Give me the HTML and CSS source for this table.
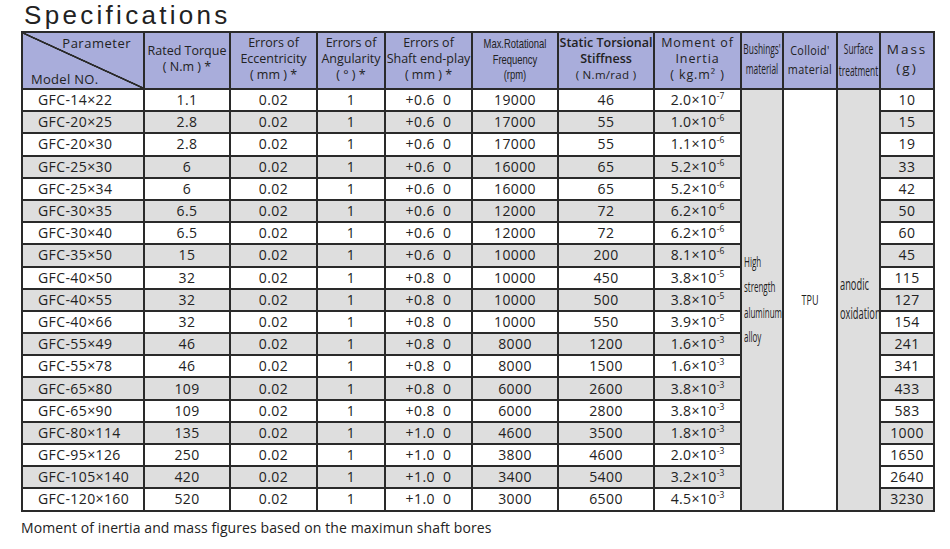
FILE: index.html
```html
<!DOCTYPE html>
<html>
<head>
<meta charset="utf-8">
<link rel="stylesheet" href="styles.css">
</head>
<body>
<h1 class="title">Specifications</h1>
<table class="spec">
<colgroup>
<col class="c-model"><col class="c-torque"><col class="c-ecc"><col class="c-ang"><col class="c-shaft"><col class="c-rpm"><col class="c-stiff"><col class="c-inertia"><col class="c-bush"><col class="c-colloid"><col class="c-surface"><col class="c-mass">
</colgroup>
<thead>
<tr>
<th class="diag"><span class="param">Parameter</span><span class="model">Model NO.</span></th>
<th class="h-torque">Rated Torque<br>( N.m ) *</th>
<th>Errors of<br>Eccentricity<br>( mm ) *</th>
<th>Errors of<br>Angularity<br>( ° ) *</th>
<th>Errors of<br>Shaft end-play<br>( mm ) *</th>
<th><div class="fx"><span class="cond c-rpmtxt">Max.Rotational<br>Frequency<br>(rpm)</span></div></th>
<th class="h-stiff">Static Torsional<br>Stiffness<br><span class="small">( N.m/rad )</span></th>
<th class="h-inertia">Moment of<br>Inertia<br>( kg.m² )</th>
<th><div class="fx"><span class="cond cond-tight">Bushings'<br>material</span></div></th>
<th><div class="fx"><span class="cond cond-mid">Colloid'<br>material</span></div></th>
<th><div class="fx"><span class="cond cond-surf">Surface<br>treatment</span></div></th>
<th class="h-mass">Mass<br>(g)</th>
</tr>
</thead>
<tbody>
<tr class="w"><td class="m">GFC-14×22</td><td>1.1</td><td>0.02</td><td>1</td><td>+0.6&nbsp;&nbsp;0</td><td>19000</td><td>46</td><td>2.0×10<sup>-7</sup></td>
<td rowspan="19" class="merged g"><span class="mtxt vlist">High<br>strength<br>aluminum<br>alloy</span></td>
<td rowspan="19" class="merged w"><div class="fx"><span class="cond tpu">TPU</span></div></td>
<td rowspan="19" class="merged g"><span class="mtxt vlist2">anodic<br>oxidation</span></td>
<td class="w">10</td></tr>
<tr class="g"><td class="m">GFC-20×25</td><td>2.8</td><td>0.02</td><td>1</td><td>+0.6&nbsp;&nbsp;0</td><td>17000</td><td>55</td><td>1.0×10<sup>-6</sup></td><td class="g">15</td></tr>
<tr class="w"><td class="m">GFC-20×30</td><td>2.8</td><td>0.02</td><td>1</td><td>+0.6&nbsp;&nbsp;0</td><td>17000</td><td>55</td><td>1.1×10<sup>-6</sup></td><td class="w">19</td></tr>
<tr class="g"><td class="m">GFC-25×30</td><td>6</td><td>0.02</td><td>1</td><td>+0.6&nbsp;&nbsp;0</td><td>16000</td><td>65</td><td>5.2×10<sup>-6</sup></td><td class="g">33</td></tr>
<tr class="w"><td class="m">GFC-25×34</td><td>6</td><td>0.02</td><td>1</td><td>+0.6&nbsp;&nbsp;0</td><td>16000</td><td>65</td><td>5.2×10<sup>-6</sup></td><td class="w">42</td></tr>
<tr class="g"><td class="m">GFC-30×35</td><td>6.5</td><td>0.02</td><td>1</td><td>+0.6&nbsp;&nbsp;0</td><td>12000</td><td>72</td><td>6.2×10<sup>-6</sup></td><td class="g">50</td></tr>
<tr class="w"><td class="m">GFC-30×40</td><td>6.5</td><td>0.02</td><td>1</td><td>+0.6&nbsp;&nbsp;0</td><td>12000</td><td>72</td><td>6.2×10<sup>-6</sup></td><td class="w">60</td></tr>
<tr class="g"><td class="m">GFC-35×50</td><td>15</td><td>0.02</td><td>1</td><td>+0.6&nbsp;&nbsp;0</td><td>10000</td><td>200</td><td>8.1×10<sup>-6</sup></td><td class="g">45</td></tr>
<tr class="w"><td class="m">GFC-40×50</td><td>32</td><td>0.02</td><td>1</td><td>+0.8&nbsp;&nbsp;0</td><td>10000</td><td>450</td><td>3.8×10<sup>-5</sup></td><td class="w">115</td></tr>
<tr class="g"><td class="m">GFC-40×55</td><td>32</td><td>0.02</td><td>1</td><td>+0.8&nbsp;&nbsp;0</td><td>10000</td><td>500</td><td>3.8×10<sup>-5</sup></td><td class="g">127</td></tr>
<tr class="w"><td class="m">GFC-40×66</td><td>32</td><td>0.02</td><td>1</td><td>+0.8&nbsp;&nbsp;0</td><td>10000</td><td>550</td><td>3.9×10<sup>-5</sup></td><td class="w">154</td></tr>
<tr class="g"><td class="m">GFC-55×49</td><td>46</td><td>0.02</td><td>1</td><td>+0.8&nbsp;&nbsp;0</td><td>8000</td><td>1200</td><td>1.6×10<sup>-3</sup></td><td class="g">241</td></tr>
<tr class="w"><td class="m">GFC-55×78</td><td>46</td><td>0.02</td><td>1</td><td>+0.8&nbsp;&nbsp;0</td><td>8000</td><td>1500</td><td>1.6×10<sup>-3</sup></td><td class="w">341</td></tr>
<tr class="g"><td class="m">GFC-65×80</td><td>109</td><td>0.02</td><td>1</td><td>+0.8&nbsp;&nbsp;0</td><td>6000</td><td>2600</td><td>3.8×10<sup>-3</sup></td><td class="g">433</td></tr>
<tr class="w"><td class="m">GFC-65×90</td><td>109</td><td>0.02</td><td>1</td><td>+0.8&nbsp;&nbsp;0</td><td>6000</td><td>2800</td><td>3.8×10<sup>-3</sup></td><td class="w">583</td></tr>
<tr class="g"><td class="m">GFC-80×114</td><td>135</td><td>0.02</td><td>1</td><td>+1.0&nbsp;&nbsp;0</td><td>4600</td><td>3500</td><td>1.8×10<sup>-3</sup></td><td class="g">1000</td></tr>
<tr class="w"><td class="m">GFC-95×126</td><td>250</td><td>0.02</td><td>1</td><td>+1.0&nbsp;&nbsp;0</td><td>3800</td><td>4600</td><td>2.0×10<sup>-3</sup></td><td class="w">1650</td></tr>
<tr class="g"><td class="m">GFC-105×140</td><td>420</td><td>0.02</td><td>1</td><td>+1.0&nbsp;&nbsp;0</td><td>3400</td><td>5400</td><td>3.2×10<sup>-3</sup></td><td class="w">2640</td></tr>
<tr class="w"><td class="m">GFC-120×160</td><td>520</td><td>0.02</td><td>1</td><td>+1.0&nbsp;&nbsp;0</td><td>3000</td><td>6500</td><td>4.5×10<sup>-3</sup></td><td class="g">3230</td></tr>
</tbody>
</table>
<p class="note">Moment of inertia and mass figures based on the maximun shaft bores</p>
</body>
</html>
```

FILE: styles.css
```css
html, body {
  margin: 0;
  padding: 0;
  background: #ffffff;
}
body {
  padding-left: 21px;
  font-family: "Open Sans", "Liberation Sans", sans-serif;
  color: #222;
}
.title {
  margin: 0;
  height: 31px;
  font-family: "Liberation Sans", "Open Sans", sans-serif;
  font-size: 26px;
  line-height: 30px;
  font-weight: normal;
  letter-spacing: 3.3px;
  padding-left: 3px;
  color: #222;
}
.spec {
  border-collapse: collapse;
  table-layout: fixed;
  width: 912px;
  border: 2px solid #2a2a2a;
}
.c-model { width: 122px; }
.c-torque { width: 86px; }
.c-ecc { width: 87px; }
.c-ang { width: 68px; }
.c-shaft { width: 87px; }
.c-rpm { width: 86px; }
.c-stiff { width: 96px; }
.c-inertia { width: 87px; }
.c-bush { width: 42px; }
.c-colloid { width: 54px; }
.c-surface { width: 43px; }
.c-mass { width: 54px; }

.spec th, .spec td {
  border: 2px solid #2a2a2a;
  padding: 0;
  text-align: center;
  white-space: nowrap;
}
.spec thead tr { height: 57px; }
.spec th {
  background: #a9addb;
  font-weight: normal;
  font-size: 12.5px;
  line-height: 16px;
  padding-bottom: 3px;
  color: #222;
}
.spec tbody tr { height: 22.2px; }
.spec td {
  font-size: 14px;
  line-height: 18px;
  letter-spacing: 0.4px;
  color: #222;
}
.spec tr.w td { background: #ffffff; }
.spec tr.g td { background: #dedede; }
.spec tr td.w { background: #ffffff; }
.spec tr td.g { background: #dedede; }
.spec td.m {
  text-align: left;
  padding-left: 15px;
}
.spec td sup {
  font-size: 8.5px;
  line-height: 0;
  vertical-align: 6px;
  letter-spacing: 0;
}

.fx {
  display: flex;
  justify-content: center;
  align-items: center;
}
.diag {
  position: relative;
  background: #a9addb linear-gradient(to top right, rgba(0,0,0,0) calc(50% - 1.2px), #2a2a2a calc(50% - 0.6px), #2a2a2a calc(50% + 0.6px), rgba(0,0,0,0) calc(50% + 1.2px)) !important;
}
.diag .param {
  position: absolute;
  top: 2px;
  right: 12px;
  font-size: 13px;
  letter-spacing: 0.5px;
}
.diag .model {
  position: absolute;
  left: 8px;
  bottom: 1px;
  font-size: 13px;
  letter-spacing: 0.3px;
}
.h-stiff {
  font-size: 12.5px !important;
  font-weight: 600 !important;
  letter-spacing: 0;
}
.h-stiff .small {
  font-size: 11.5px;
  font-weight: normal;
  letter-spacing: 0.3px;
}
.h-inertia {
  font-size: 12.5px !important;
  letter-spacing: 0.9px;
}
.h-mass {
  font-size: 13.5px !important;
  letter-spacing: 2px;
  line-height: 18.5px !important;
  padding-bottom: 4px !important;
}
/* condensed text: small font stretched vertically */
.cond {
  display: inline-block;
  flex: none;
  transform-origin: center;
  letter-spacing: 0;
}
.c-rpmtxt {
  font-family: "Liberation Sans", "Open Sans", sans-serif;
  font-size: 9.45px;
  line-height: 11.6px;
  transform: scaleY(1.333);
}
.cond-tight {
  font-size: 8.4px;
  line-height: 11.6px;
  transform: scaleY(1.667);
}
.cond-mid {
  font-size: 10.8px;
  line-height: 15.2px;
  letter-spacing: 0.32px;
  transform: scaleY(1.25);
}
.cond-surf {
  font-size: 8.4px;
  line-height: 13.2px;
  transform: scaleY(1.667);
}
.merged {
  vertical-align: middle;
  text-align: left !important;
}
.mtxt {
  display: inline-block;
  letter-spacing: 0;
  transform-origin: left center;
  padding-left: 2px;
}
.vlist {
  font-size: 8px;
  line-height: 14.3px;
  transform: scaleY(1.75);
}
.vlist2 {
  font-size: 9.3px;
  line-height: 17.4px;
  transform: scaleY(1.724);
}
.tpu {
  font-size: 9px;
  line-height: 12.5px;
  transform: scaleY(1.667);
}
.note {
  margin: 6px 0 0 0;
  font-size: 14px;
  line-height: 19.5px;
  letter-spacing: 0.1px;
  color: #222;
}
```
